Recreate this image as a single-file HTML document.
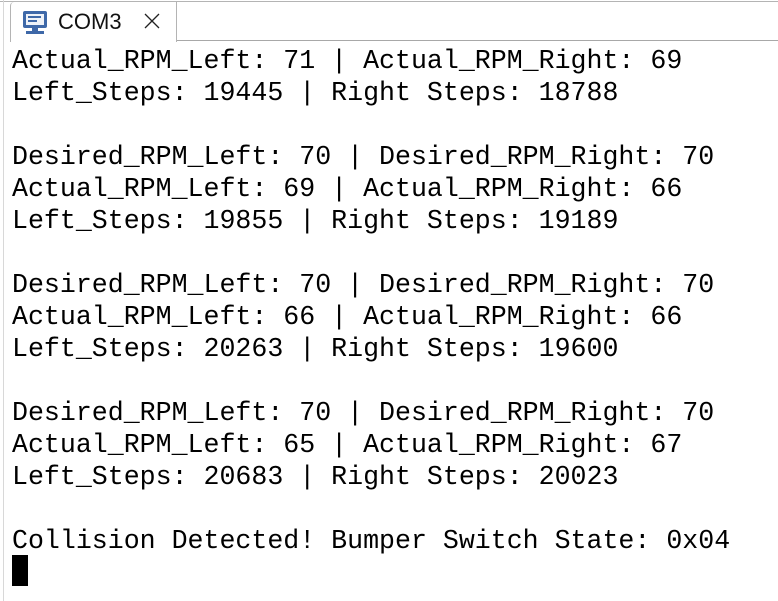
<!DOCTYPE html>
<html><head><style>
body{margin:0;width:778px;height:601px;overflow:hidden;background:#fff;position:relative;font-family:"Liberation Sans",sans-serif}
.topl{position:absolute;left:0;top:1px;width:778px;height:1px;background:#b4b4b4}
.leftl{position:absolute;left:3px;top:0;width:1px;height:601px;background:#d8d8d8}
.tabl{position:absolute;left:176px;top:40px;width:602px;height:1px;background:#a8a8a8}
.tab{position:absolute;left:10px;top:2px;width:165px;height:40px;border-left:1px solid #b4b4b4;border-right:1px solid #b4b4b4;border-top-left-radius:4px;background:#fff}
.title{position:absolute;left:58px;top:9px;font-size:22px;color:#111}
.x{position:absolute;left:143px;top:12px}
pre{position:absolute;left:12px;top:45px;margin:0;font-family:"Liberation Mono",monospace;font-size:26.6px;line-height:32px;color:#000}
.cur{position:absolute;left:12px;top:555px;width:16px;height:31px;background:#000}
</style></head><body>
<div class="topl"></div><div class="leftl"></div><div class="tabl"></div>
<div class="tab"></div>
<svg style="position:absolute;left:22px;top:10px" width="26" height="25" viewBox="0 0 26 25">
<rect x="1" y="1" width="24" height="17" rx="2" fill="#3e68a8"/>
<rect x="4" y="4" width="18" height="11" fill="#eef2f8"/>
<rect x="6" y="6" width="13" height="2" fill="#3e68a8"/><rect x="6" y="10" width="9" height="2" fill="#3e68a8"/>
<rect x="10" y="18" width="6" height="3" fill="#3e68a8"/><rect x="4" y="21" width="18" height="3" fill="#3e68a8"/>
</svg>
<div class="title">COM3</div>
<svg class="x" width="18" height="18" viewBox="0 0 18 18"><path d="M2 2L16 16M16 2L2 16" stroke="#222" stroke-width="1.3"/></svg>
<pre>Actual_RPM_Left: 71 | Actual_RPM_Right: 69
Left_Steps: 19445 | Right Steps: 18788

Desired_RPM_Left: 70 | Desired_RPM_Right: 70
Actual_RPM_Left: 69 | Actual_RPM_Right: 66
Left_Steps: 19855 | Right Steps: 19189

Desired_RPM_Left: 70 | Desired_RPM_Right: 70
Actual_RPM_Left: 66 | Actual_RPM_Right: 66
Left_Steps: 20263 | Right Steps: 19600

Desired_RPM_Left: 70 | Desired_RPM_Right: 70
Actual_RPM_Left: 65 | Actual_RPM_Right: 67
Left_Steps: 20683 | Right Steps: 20023

Collision Detected! Bumper Switch State: 0x04</pre>
<div class="cur"></div>
</body></html>
